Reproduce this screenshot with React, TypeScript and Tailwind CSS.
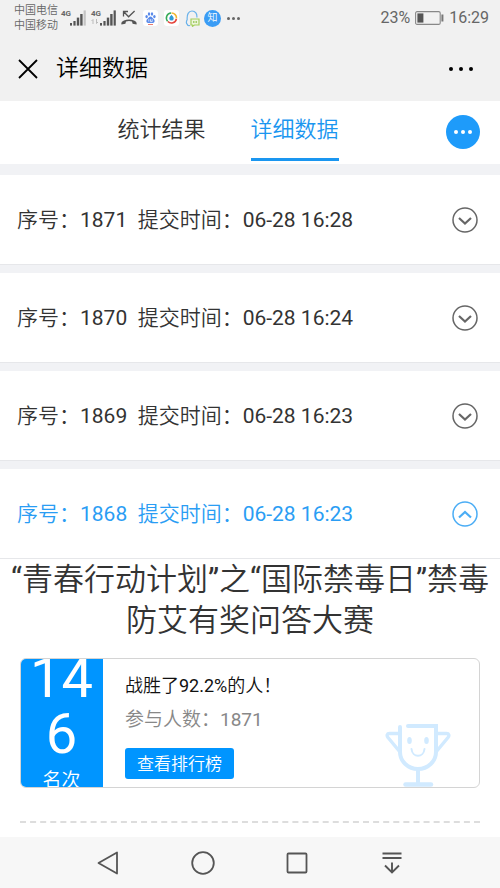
import React, { useState } from "react";

const FONT = "font-[Roboto,'Noto_Sans_CJK_SC_DemiLight','Noto_Sans_CJK_SC',sans-serif]";

function SignalBars({ weak }: { weak?: boolean }) {
  return (
    <svg width="16" height="16" viewBox="0 0 16 16" fill="#555" aria-hidden="true">
      <rect x="0" y="13" width="2" height="2.6" />
      <rect x="3.4" y="11" width="2.2" height="4.6" />
      <rect x="6.8" y="7.6" width="2.4" height="8" />
      <rect x="10.2" y="4" width="2.4" height="11.6" />
      <rect x="13.6" y="0.4" width="2.2" height="15.2" fill={weak ? "#c4c4c4" : "#555"} />
    </svg>
  );
}

function MissedCall() {
  return (
    <svg width="16" height="16" viewBox="0 0 16 16" fill="none" aria-hidden="true">
      <path d="M2.5 6.500V1.500H7M2.800 1.800l4.800 5L13.600 1" stroke="#555" strokeWidth="1.300" />
      <path d="M.4 14.500C0 12.500 1 11.300 3 10.500c3-1.300 7-1.300 10 0 2 .8 3 2 2.600 4l-4-.8-.6-2.100c-2-.7-4-.7-6 0l-.6 2.100z" fill="#555" />
    </svg>
  );
}

function Paw() {
  return (
    <svg width="15" height="16" viewBox="0 0 15 16" aria-hidden="true">
      <rect width="15" height="16" rx="3" fill="#fff" />
      <g fill="#5b8bea">
        <ellipse cx="3.600" cy="6.600" rx="1.200" ry="1.600" />
        <ellipse cx="6" cy="4" rx="1.200" ry="1.700" />
        <ellipse cx="9" cy="4" rx="1.200" ry="1.700" />
        <ellipse cx="11.400" cy="6.600" rx="1.200" ry="1.600" />
        <path d="M7.500 6.500c1.500 0 2 1.500 3.200 2.600 1.300 1.200 1.300 3.900-.9 3.900H5.200c-2.200 0-2.200-2.700-.9-3.900C5.500 8 6 6.500 7.500 6.500z" />
      </g>
      <path d="M5.800 9.200v2.400M9.200 9.200v2.400H7.500V9.200" stroke="#fff" strokeWidth=".7" fill="none" />
      <rect x="5" y="14" width="5" height=".9" fill="#e46c62" />
    </svg>
  );
}

function ColorRing() {
  return (
    <svg width="15" height="16" viewBox="0 0 15 16" fill="none" aria-hidden="true">
      <rect width="15" height="16" rx="3" fill="#fff" />
      <path d="M3.600 11.200A5 5 0 0 1 7 3" stroke="#37ab58" strokeWidth="1.600" />
      <path d="M7.500 3A5 5 0 0 1 12.500 8.500" stroke="#f2b632" strokeWidth="1.600" />
      <path d="M12.400 9A5 5 0 0 1 3.900 11.500" stroke="#e5443b" strokeWidth="1.600" />
      <path d="M7.500 4.800c1 1.400 2.200 2.300 2.200 3.600a2.200 2.200 0 0 1-4.400 0c0-1.300 1.200-2.200 2.200-3.600z" fill="#2f9bd8" />
    </svg>
  );
}

function ChatPenguin() {
  return (
    <svg width="15" height="17" viewBox="0 0 15 17" fill="none" aria-hidden="true">
      <path d="M5 15.500c-1.500.3-2.800 0-2.500-1C1 13.500 1.200 11.500 2.200 9.500 1.800 4.500 3.500 1 7 1s5.200 3 4.900 6.500" stroke="#6ab2ea" strokeWidth="1.200" />
      <path d="M6 9h8v6h-4.500L7.500 16.300V15H6z" stroke="#a5cf5d" strokeWidth="1.200" fill="#edf5dc" />
      <path d="M8 12h4" stroke="#8cc04a" strokeWidth="1.400" strokeDasharray="1 .5" />
    </svg>
  );
}

function Battery() {
  return (
    <svg width="29" height="14" viewBox="0 0 29 14" fill="none" aria-hidden="true">
      <rect x=".6" y=".6" width="24.600" height="12.800" rx="1.500" stroke="#888" strokeWidth="1.100" />
      <rect x="2.400" y="2.400" width="6" height="9.200" fill="#555" />
      <rect x="26.400" y="3.500" width="2" height="7" fill="#777" />
    </svg>
  );
}

function Dots({ size, gap }: { size: number; gap: number }) {
  const width = size * 3 + gap * 2;
  return (
    <svg width={width} height={size} viewBox={`0 0 ${width} ${size}`} fill="currentColor" aria-hidden="true">
      {[0, 1, 2].map((i) => (
        <circle key={i} cx={size / 2 + i * (size + gap)} cy={size / 2} r={size / 2} />
      ))}
    </svg>
  );
}

function Chevron({ open }: { open: boolean }) {
  return (
    <svg width="26" height="26" viewBox="0 0 26 26" fill="none" stroke={open ? "#4badf5" : "#666"} aria-hidden="true">
      <circle cx="13" cy="13" r="12" strokeWidth="1.500" />
      <path d={open ? "M7 16.500l6-5.500 6 5.500" : "M7 11l6 5.500 6-5.500"} strokeWidth="2.200" />
    </svg>
  );
}

function Trophy() {
  return (
    <svg width="66" height="63" viewBox="0 0 66 63" fill="none" stroke="#d1eaff" strokeWidth="4" strokeLinecap="round" aria-hidden="true">
      <path d="M15 3v25a18 17 0 0 0 36 0V2H23" />
      <path d="M14 9.500H4.500c-2.500 0-3 2-1.500 4L15 28M52 9.500h9.500c2.500 0 3 2 1.500 4L51 28" strokeWidth="3.400" />
      <path d="M33 46v14" strokeLinecap="butt" />
      <path d="M20.500 60.500h25.500" strokeWidth="4.500" />
      <path d="M26.500 25c1 9 12 9 13 0" strokeWidth="2" />
      <g fill="#d1eaff" stroke="none">
        <ellipse cx="24.500" cy="16.500" rx="2.300" ry="3.500" />
        <ellipse cx="41.500" cy="16.500" rx="2.300" ry="3.500" />
      </g>
    </svg>
  );
}

const records = [
  { id: 1871, time: "06-28 16:28" },
  { id: 1870, time: "06-28 16:24" },
  { id: 1869, time: "06-28 16:23" },
  { id: 1868, time: "06-28 16:23" },
];

function StatusBar() {
  return (
    <div className="flex h-9 items-center justify-between pr-[11px] pl-[14px] text-[#666]">
      <div className="flex items-center">
        <div className="text-[11px] leading-[15px]">
          <div>中国电信</div>
          <div>中国移动</div>
        </div>
        <div className="ml-[3px] flex h-4 items-start">
          <span className="w-[9px] text-[8px] leading-[8px] font-bold">4G</span>
          <SignalBars weak />
        </div>
        <div className="ml-[5px] flex h-4 items-start">
          <div className="w-[9px]">
            <div className="text-[8px] leading-[8px] font-bold">4G</div>
            <svg width="8" height="7" viewBox="0 0 8 7" fill="none" stroke="#bbb" aria-hidden="true">
              <path d="M2 6V1.500M.5 3L2 1.500M5.500 1v4.500M7 4L5.500 5.500" />
            </svg>
          </div>
          <SignalBars />
        </div>
        <div className="ml-[5px] flex items-center gap-[6px]">
          <MissedCall />
          <Paw />
          <ColorRing />
          <ChatPenguin />
          <span className="-ml-[2px] flex size-[17px] items-center justify-center rounded-full bg-[#3a9cf5] text-[10px] leading-none text-white">知</span>
          <Dots size={3} gap={2} />
        </div>
      </div>
      <div className="flex items-center gap-[5px] text-[16px] leading-5">
        <span>23%</span>
        <Battery />
        <span>16:29</span>
      </div>
    </div>
  );
}

function ResultCard() {
  return (
    <section className="mx-5 flex h-[130px] overflow-hidden rounded-md border border-[#d4d4d4]">
      <div className="-my-px -ml-px flex w-[83px] shrink-0 flex-col items-center justify-center bg-[#0095ff] px-2 text-center text-white">
        <div className="w-full text-[56px] leading-[56px] break-all">146</div>
        <div className="mt-1 text-[19px] leading-[30px]">名次</div>
      </div>
      <div className="flex flex-1 justify-between pr-7 pl-[22px]">
        <div className="flex flex-col items-start">
          <p className="mt-[13px] text-[18px] leading-7 text-[#111]">战胜了92.2%的人！</p>
          <p className="mt-1 text-[19px] leading-8 text-[#888]">参与人数：1871</p>
          <button className="mt-3 h-[31px] rounded-[3px] bg-[#0095ff] px-3 text-[17px] leading-6 text-white">查看排行榜</button>
        </div>
        <div className="self-end">
          <Trophy />
        </div>
      </div>
    </section>
  );
}

export default function App() {
  const [openId, setOpenId] = useState<number | null>(1868);

  return (
    <div className={`flex min-h-screen flex-col bg-white text-[#333] ${FONT}`}>
      <header className="bg-[#f1f1f1]">
        <StatusBar />
        <div className="flex h-[65px] items-center pr-[27px] pl-[18px] text-black">
          <button aria-label="关闭">
            <svg width="20" height="20" viewBox="0 0 20 20" stroke="currentColor" strokeWidth="1.800" aria-hidden="true">
              <path d="M1 1l18 18M19 1L1 19" />
            </svg>
          </button>
          <h1 className="ml-[18px] flex-1 pt-px text-[23px] leading-8">详细数据</h1>
          <button aria-label="更多">
            <Dots size={4} gap={6} />
          </button>
        </div>
      </header>

      <nav className="grid h-[63px] grid-cols-[1fr_auto_1fr] items-start">
        <span />
        <div className="flex gap-[45px] pr-11 text-[22px]">
          <button className="h-[60px] border-b-[3px] border-transparent pb-px">统计结果</button>
          <button className="h-[60px] border-b-[3px] border-[#1a96f0] pb-px text-[#1a96f0]">详细数据</button>
        </div>
        <button aria-label="菜单" className="mt-[14px] mr-5 flex size-[34px] items-center justify-center justify-self-end rounded-full bg-[#1e9bfa] text-white">
          <Dots size={4} gap={3} />
        </button>
      </nav>

      <main className="flex-1">
        <ul className="flex flex-col gap-2 bg-[#f1f2f5] pt-[11px]">
          {records.map((r) => {
            const open = r.id === openId;
            return (
              <li key={r.id} className="border-b border-[#e6e7ea] bg-white">
                <button
                  aria-expanded={open}
                  onClick={() => setOpenId(open ? null : r.id)}
                  className={`flex h-[89px] w-full items-center justify-between pr-[22px] pl-[17px] text-[21px] leading-8 ${open ? "text-[#2a9df4]" : "text-[#333]"}`}
                >
                  <span>
                    序号：{r.id}&nbsp; 提交时间：{r.time}
                  </span>
                  <Chevron open={open} />
                </button>
              </li>
            );
          })}
        </ul>

        <h2 className="text-center text-[31px] leading-[41px]">
          “青春行动计划”之“国际禁毒日”禁毒防艾有奖问答大赛
        </h2>
        <div className="mt-[17px]">
          <ResultCard />
        </div>
        <div className="mx-5 mt-[33px] border-t-2 border-dashed border-[#ddd]" />
      </main>

      <footer className="grid h-[51px] grid-cols-4 items-center justify-items-center bg-[#f7f7f7] px-[61px] text-[#555]">
        <button aria-label="返回">
          <svg width="24" height="24" viewBox="0 0 24 24" fill="none" stroke="currentColor" strokeWidth="1.800" strokeLinejoin="round" aria-hidden="true">
            <path d="M21 1.500v21L2.500 12z" />
          </svg>
        </button>
        <button aria-label="主页">
          <svg width="24" height="24" viewBox="0 0 24 24" fill="none" stroke="currentColor" strokeWidth="1.800" aria-hidden="true">
            <circle cx="12" cy="12" r="10.800" />
          </svg>
        </button>
        <button aria-label="最近任务">
          <svg width="24" height="24" viewBox="0 0 24 24" fill="none" stroke="currentColor" strokeWidth="1.800" aria-hidden="true">
            <rect x="2.500" y="2.500" width="19" height="19" rx="1" />
          </svg>
        </button>
        <button aria-label="通知栏">
          <svg width="24" height="24" viewBox="0 0 24 24" fill="none" stroke="currentColor" strokeWidth="1.900" aria-hidden="true">
            <path d="M2.500 2.500h19M2.500 7h19M12 11.500V21M5 14.500l7 7 7-7" />
          </svg>
        </button>
      </footer>
    </div>
  );
}
